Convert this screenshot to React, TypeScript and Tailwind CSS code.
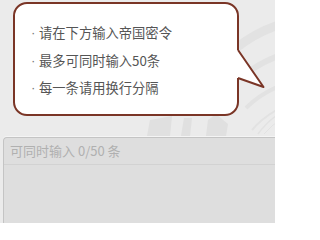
import React from "react";

const lines = ["请在下方输入帝国密令", "最多可同时输入50条", "每一条请用换行分隔"];

export default function App() {
  return (
    <div
      className="relative w-[275px] h-[223px] overflow-hidden bg-[#ebebeb]"
      style={{ fontFamily: '"Noto Sans CJK SC", "Noto Sans", sans-serif' }}
    >
      {/* faint watermark */}
      <svg className="absolute left-0 top-0" width="275" height="223" viewBox="0 0 275 223">
        <g fill="none" stroke="#e2e2e2">
          <path d="M236 48 Q262 28 290 22" strokeWidth="9" />
          <path d="M240 78 Q262 60 290 52" strokeWidth="6" />
          <path d="M246 108 Q262 92 285 84" strokeWidth="4" />
          <path d="M252 130 Q262 118 280 108" strokeWidth="2" />
          <path d="M258 134 Q268 120 282 112" strokeWidth="1.5" />
          <path d="M264 134 Q272 124 284 118" strokeWidth="1" />
        </g>
        <g fill="#e0e0e0">
          <polygon points="150,120 172,116 170,136 147,136" />
          <polygon points="184,118 192,118 190,136 181,136" />
          <polygon points="208,120 216,114 228,124 226,136 206,136" />
        </g>
      </svg>

      <div className="relative flex flex-col">
        {/* bubble */}
        <div className="relative ml-[13px] mt-[2px] w-[226px] h-[114px]">
          <div className="flex h-full w-full flex-col gap-[9px] rounded-[14px] border-2 border-[#7a3526] bg-white pl-[16px] pt-[20px] text-[13.3px] leading-[18.5px] text-[#555555]">
            {lines.map((t) => (
              <div key={t} className="flex">
                <span
                  className="w-[8px] text-[#777777]"
                  style={{ fontFamily: '"Liberation Sans", sans-serif' }}
                >
                  ·
                </span>
                <span>{t}</span>
              </div>
            ))}
          </div>
          <svg className="absolute left-[223px] top-[45px]" width="32" height="46" viewBox="0 0 32 46">
            <polygon points="0,3 2,3 27.5,40 2,31 0,31" fill="#ffffff" />
            <polyline
              points="2,3 27.5,40 2,31"
              fill="none"
              stroke="#7a3526"
              strokeWidth="2"
              strokeLinejoin="round"
            />
          </svg>
        </div>

        {/* textarea */}
        <div className="ml-[3px] mt-[21px] flex h-[90px] flex-col rounded-tl-[4px] border-l border-t border-[#c4c4c4] bg-[#dedede] shadow-[0_-1px_0_#f4f4f4]">
          <div className="flex h-[27px] items-center border-b border-[#d2d2d2] pl-[6px] text-[13px] text-[#b0b0b0]">
            可同时输入 0/50 条
          </div>
          <div className="flex-1" />
        </div>
      </div>
    </div>
  );
}
